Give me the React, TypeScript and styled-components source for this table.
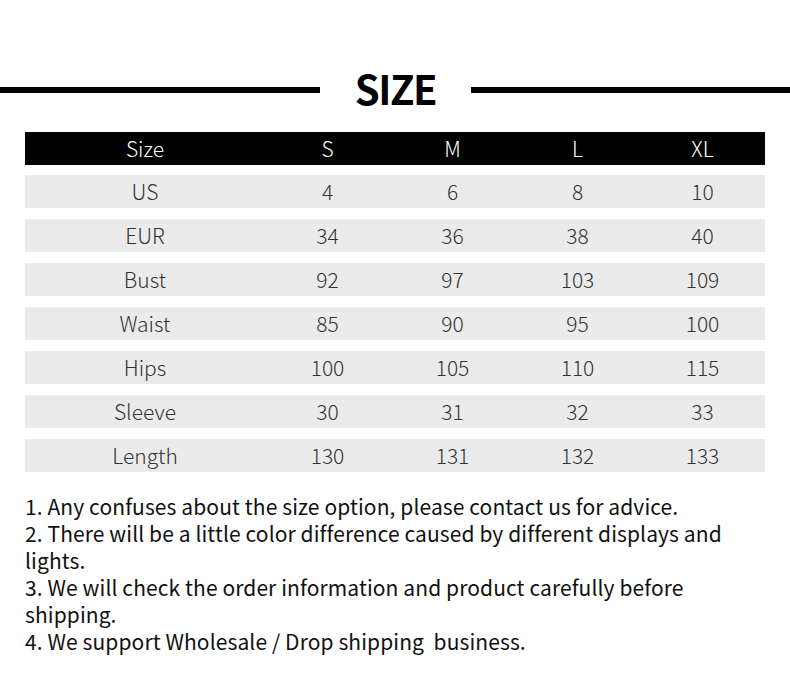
import React from 'react';
import styled, { createGlobalStyle } from 'styled-components';

const sizes = ['S', 'M', 'L', 'XL'];

const rows: { label: string; values: string[] }[] = [
  { label: 'US', values: ['4', '6', '8', '10'] },
  { label: 'EUR', values: ['34', '36', '38', '40'] },
  { label: 'Bust', values: ['92', '97', '103', '109'] },
  { label: 'Waist', values: ['85', '90', '95', '100'] },
  { label: 'Hips', values: ['100', '105', '110', '115'] },
  { label: 'Sleeve', values: ['30', '31', '32', '33'] },
  { label: 'Length', values: ['130', '131', '132', '133'] },
];

const notes = [
  '1. Any confuses about the size option, please contact us for advice.',
  '2. There will be a little color difference caused by different displays and lights.',
  '3. We will check the order information and product carefully before shipping.',
  '4. We support Wholesale / Drop shipping  business.',
];

const App = () => {
  return (
    <Page>
      <GlobalStyle />
      <TitleBar>
        <Rule />
        <Title>SIZE</Title>
        <Rule />
      </TitleBar>

      <Table>
        <HeaderRow>
          <Cell>Size</Cell>
          {sizes.map((s) => (
            <Cell key={s}>{s}</Cell>
          ))}
        </HeaderRow>
        {rows.map((r) => (
          <BodyRow key={r.label}>
            <Cell>{r.label}</Cell>
            {r.values.map((v, i) => (
              <Cell key={i}>{v}</Cell>
            ))}
          </BodyRow>
        ))}
      </Table>

      <Notes>
        {notes.map((n) => (
          <Note key={n}>{n}</Note>
        ))}
      </Notes>
    </Page>
  );
};

export default App;

const GlobalStyle = createGlobalStyle`
  html, body {
    margin: 0;
    padding: 0;
    background: #fff;
  }
`;

const Page = styled.div`
  width: 790px;
  height: 675px;
  background: #fff;
  font-family: 'Noto Sans CJK SC', 'Noto Sans', sans-serif;
  padding-top: 64px;
  box-sizing: border-box;
  overflow: hidden;
`;

const TitleBar = styled.div`
  display: grid;
  grid-template-columns: 320px 1fr 319px;
  align-items: center;
  height: 48px;
`;

const Rule = styled.div`
  height: 6px;
  background: #000;
  margin-top: 3px;
`;

const Title = styled.div`
  text-align: center;
  font-size: 40px;
  font-weight: 700;
  letter-spacing: -1.5px;
  color: #000;
  line-height: 48px;
`;

const Table = styled.div`
  margin: 20px 25px 0;
  display: flex;
  flex-direction: column;
  gap: 11px;
`;

const Row = styled.div`
  display: grid;
  grid-template-columns: 240px repeat(4, 125px);
  height: 33px;
  align-items: center;
`;

const HeaderRow = styled(Row)`
  background: #000;
  color: #fff;
  margin-bottom: -1px;
`;

const BodyRow = styled(Row)`
  background: #ebebeb;
  color: #333;
`;

const Cell = styled.div`
  text-align: center;
  font-size: 21px;
  font-weight: 300;
  line-height: 33px;
`;

const Notes = styled.div`
  margin: 21px 25px 0;
  width: 725px;
`;

const Note = styled.div`
  font-size: 21px;
  line-height: 27px;
  color: #111;
  letter-spacing: 0.1px;
  white-space: pre-wrap;
`;
